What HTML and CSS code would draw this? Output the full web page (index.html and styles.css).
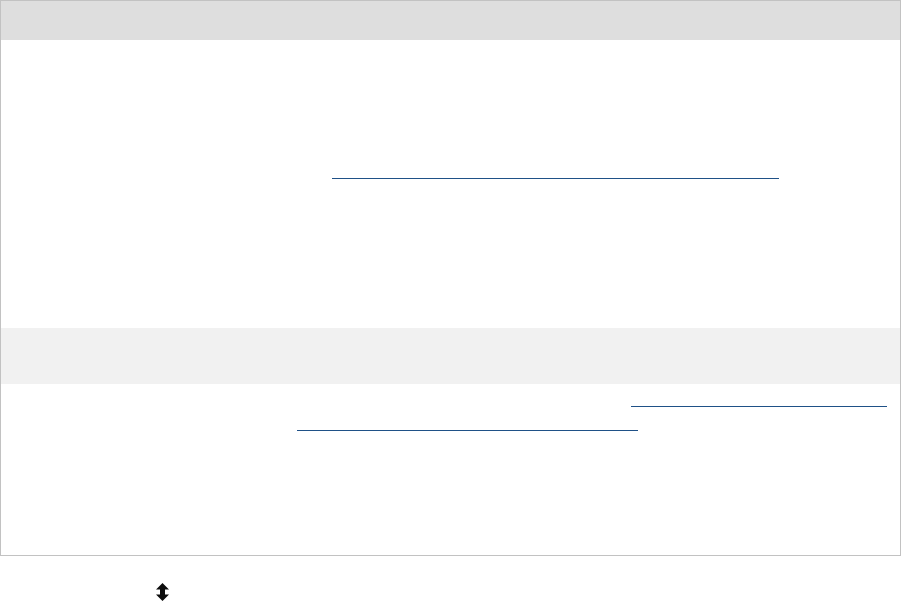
FILE: index.html
```html
<!DOCTYPE html>
<html>
<head>
<meta charset="utf-8">
<link rel="stylesheet" href="styles.css">
</head>
<body>
<div class="table">
  <div class="row head"></div>
  <div class="row body-a">
    <span class="link link-a"></span>
  </div>
  <div class="row stripe"></div>
  <div class="row body-b">
    <span class="link link-b"></span>
    <span class="link link-c"></span>
  </div>
</div>
<div class="footer">
  <svg class="sort" width="13" height="18" viewBox="0 0 13 18" aria-hidden="true">
    <polygon points="6.5,0 13,6.5 9,6.5 9,11.5 13,11.5 6.5,18 0,11.5 4,11.5 4,6.5 0,6.5" fill="#0d0d0d"/>
  </svg>
</div>
</body>
</html>
```
FILE: styles.css
```css
html, body {
  margin: 0;
  padding: 0;
  background: #ffffff;
  font-family: "Liberation Sans", Arial, sans-serif;
}
.table {
  width: 901px;
  box-sizing: border-box;
  border: 1px solid #c2c2c2;
  display: flex;
  flex-direction: column;
}
.row {
  display: flex;
  flex-direction: column;
  align-items: flex-start;
}
.head {
  height: 39px;
  background: #dedede;
}
.body-a {
  height: 288px;
  box-sizing: border-box;
  padding-top: 138px;
  padding-left: 331px;
}
.stripe {
  height: 56px;
  background: #f1f1f1;
}
.body-b {
  height: 171px;
  box-sizing: border-box;
  padding-top: 22px;
}
.link {
  display: block;
  height: 0;
  border-bottom: 1px solid #1f5187;
}
.link-a {
  width: 447px;
}
.link-b {
  margin-left: 630px;
  width: 256px;
}
.link-c {
  margin-top: 23px;
  margin-left: 296px;
  width: 341px;
}
.footer {
  display: flex;
  padding-top: 27px;
  padding-left: 156px;
}
.sort {
  display: block;
}
```
